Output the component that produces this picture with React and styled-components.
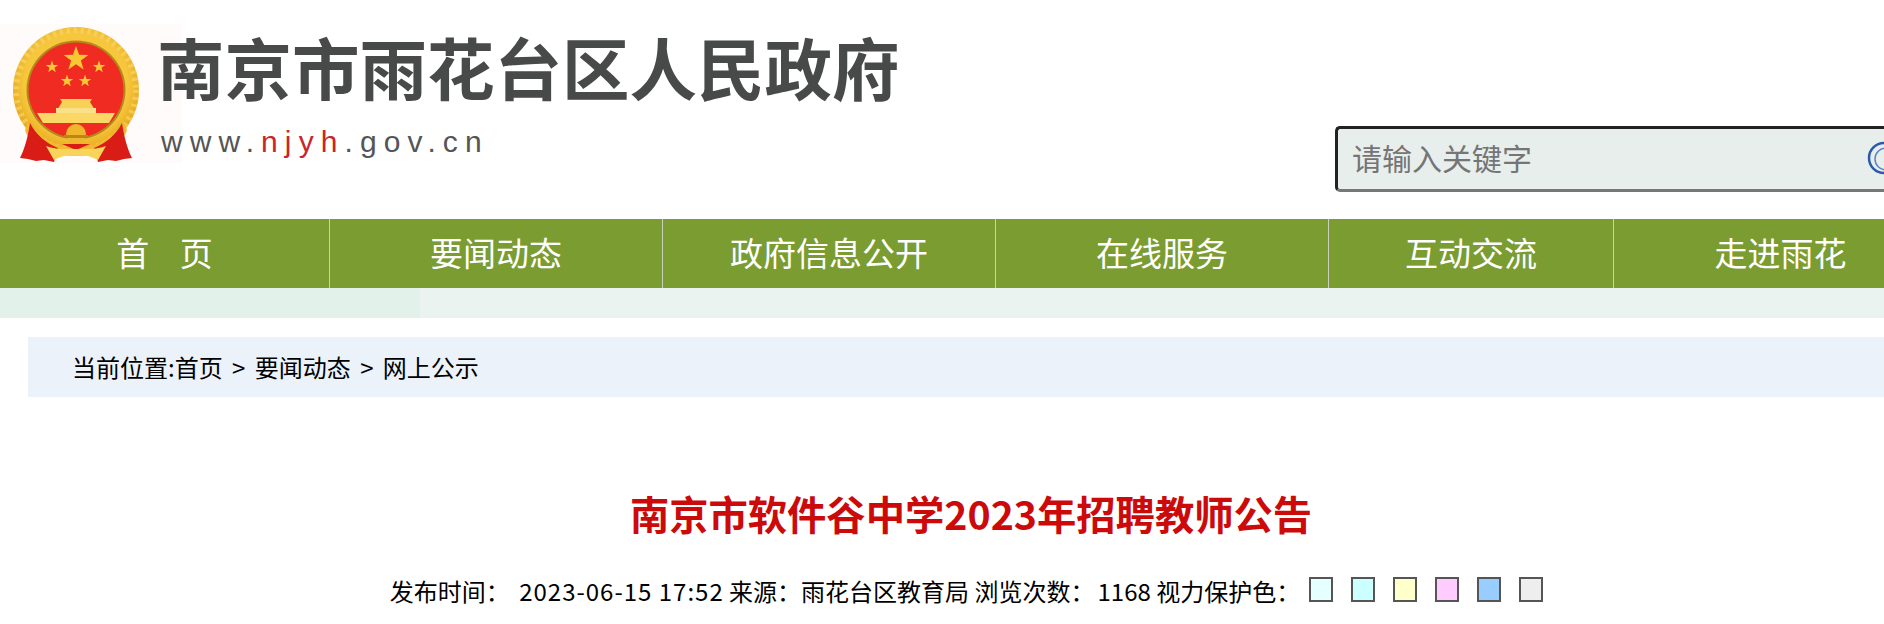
import React from "react";
import styled, { createGlobalStyle } from "styled-components";

const CJK = `"Noto Sans CJK SC", "Noto Sans", sans-serif`;

const Global = createGlobalStyle`
  html, body { margin: 0; padding: 0; background: #fff; overflow: hidden; height: 624px; }
  body { font-family: ${CJK}; color: #000; }
`;

const Page = styled.div`
  width: 1942px;
  height: 624px;
  overflow: hidden;
`;

const Header = styled.header`
  display: flex;
  height: 219px;
`;

const Brand = styled.div`
  display: flex;
  align-items: flex-start;
  height: 139px;
  margin-top: 24px;
  background: linear-gradient(to right, #fffbfb 182px, transparent 182px);
`;

const Emblem = styled.svg`
  display: block;
  width: 157px;
  height: 139px;
  flex: none;
`;

const BrandText = styled.div`
  display: flex;
  flex-direction: column;
  margin-top: 8px;
`;

const SiteName = styled.div`
  font-size: 67.5px;
  font-weight: 700;
  line-height: 68px;
  color: #484a49;
  white-space: nowrap;
`;

const SiteUrl = styled.div`
  margin: 25px 0 0 4px;
  font-family: "Liberation Sans", Arial, sans-serif;
  font-size: 30px;
  line-height: 34px;
  letter-spacing: 7.1px;
  color: #555;
  white-space: nowrap;
`;

const UrlAccent = styled.span`
  color: #c8262a;
`;

const Search = styled.form`
  display: flex;
  align-items: center;
  box-sizing: border-box;
  width: 570px;
  height: 66px;
  margin: auto 37px 27px auto;
  padding: 0 0 0 14px;
  background: #e8eeec;
  border: 3px solid;
  border-color: #222 #777 #777 #222;
  border-radius: 5px;
`;

const SearchInput = styled.input`
  flex: 1;
  min-width: 0;
  border: 0;
  outline: 0;
  padding: 0 0 5px;
  background: transparent;
  font-family: ${CJK};
  font-size: 30px;
  &::placeholder { color: #757575; opacity: 1; }
`;

const SearchButton = styled.button`
  flex: none;
  width: 36px;
  height: 38px;
  padding: 0;
  border: 0;
  background: transparent;
`;

const Nav = styled.nav`
  display: flex;
  height: 69px;
  background: #7a9c30;
`;

const NavItem = styled.a`
  flex: none;
  box-sizing: border-box;
  width: ${p => p.$w}px;
  border-right: 1px solid #c9cfb8;
  font-size: 33px;
  line-height: 66px;
  color: #fff;
  text-align: center;
  white-space: pre;
  word-spacing: ${p => p.$gap || 0}px;
  &:last-child { border-right: 0; }
`;

const Band = styled.div`
  height: 30px;
  background: linear-gradient(to right, #e3f1eb 420px, #eaf3ef 420px);
`;

const Crumbs = styled.div`
  display: flex;
  align-items: center;
  box-sizing: border-box;
  height: 60px;
  margin: 19px 0 0 28px;
  padding: 0 0 2px 44px;
  background: #ebf2fa;
  font-size: 24px;
  white-space: pre;
`;

const CrumbSep = styled.span`
  margin: 0 4px;
`;

const Title = styled.h1`
  margin: 90px 0 0;
  font-size: 39.3px;
  line-height: 52px;
  font-weight: 700;
  color: #cc0a0a;
  text-align: center;
`;

const Meta = styled.div`
  display: flex;
  justify-content: center;
  align-items: center;
  margin-top: 34px;
  padding-right: 9px;
  font-size: 24px;
  line-height: 36px;
  white-space: pre;
`;

const Value = styled.span`
  margin-left: 3px;
  letter-spacing: ${p => (p.$wide ? "1px" : "0")};
`;

const Swatches = styled.div`
  display: flex;
  gap: 18px;
  margin: 0 0 4px 9px;
`;

const Swatch = styled.span`
  display: block;
  box-sizing: border-box;
  width: 24px;
  height: 25px;
  border: 2px solid #555;
  background: ${p => p.$c};
`;

const star = (cx, cy, r, fill) => {
  const pts = [];
  for (let i = 0; i < 10; i++) {
    const a = -Math.PI / 2 + (i * Math.PI) / 5;
    const rr = i % 2 ? r * 0.4 : r;
    pts.push(`${(cx + rr * Math.cos(a)).toFixed(1)},${(cy + rr * Math.sin(a)).toFixed(1)}`);
  }
  return <polygon points={pts.join(" ")} fill={fill} />;
};

const EmblemArt = () => (
  <Emblem viewBox="0 0 157 139">
    <defs>
      <radialGradient id="gold" cx="50%" cy="45%" r="55%">
        <stop offset="0.75" stopColor="#f6c63c" />
        <stop offset="1" stopColor="#e3a51a" />
      </radialGradient>
    </defs>
    <circle cx="76" cy="66" r="63" fill="url(#gold)" />
    <circle cx="76" cy="66" r="60" fill="none" stroke="#f9d975" strokeWidth="6" strokeDasharray="3 4" opacity="0.6" />
    <circle cx="76" cy="66" r="49.5" fill="#b38a1a" />
    <circle cx="76" cy="66" r="47.5" fill="#ef2b22" />
    {star(76, 35, 13, "#f7c734")}
    {star(52, 43, 6.5, "#f7c734")}
    {star(99, 43, 6.5, "#f7c734")}
    {star(67, 57, 6.5, "#f7c734")}
    {star(85, 57, 6.5, "#f7c734")}
    <path d="M60 75h32l-2 3 5 8H57l5-8z" fill="#f8d257" />
    <path d="M56 84h40v5H56z" fill="#fbe08a" />
    <path d="M37 89h78l-6 10H43z" fill="#fbd766" />
    <path d="M28 98c12 16 30 26 48 26s36-10 48-26l3 8c-3 12-24 26-51 26S28 118 25 106z" fill="#f4b92e" />
    <path d="M30 99c6 12 16 20 28 25l-4 14-10-2-8 1-8-2-8-1c5-10 8-22 10-35z" fill="#d91c16" />
    <path d="M122 99c-6 12-16 20-28 25l4 14 10-2 8 1 8-2 8-1c-5-10-8-22-10-35z" fill="#d91c16" />
    <path d="M62 120h28l-14 6z" fill="#d91c16" />
    <circle cx="76" cy="110" r="10" fill="#f0b72d" />
    <path d="M46 122c10 4 20 3 30 3s20 1 30-3l-8 14c-8-4-15-6-22-4-7-2-14 0-22 4z" fill="#f9d45a" />
    <path d="M64 111h24v3H64z" fill="#b9861a" />
  </Emblem>
);

const SearchIcon = () => (
  <svg width="36" height="38" viewBox="0 0 36 38" fill="none">
    <circle cx="18" cy="18" r="15" stroke="#2a5aa8" strokeWidth="2.5" />
    <circle cx="20" cy="19" r="11" stroke="#5b86c6" strokeWidth="1.5" />
    <path d="M29 29l6 7" stroke="#2a5aa8" strokeWidth="3" />
  </svg>
);

const navItems = [
  { label: "首 页", w: 330, gap: 23 },
  { label: "要闻动态", w: 333 },
  { label: "政府信息公开", w: 333 },
  { label: "在线服务", w: 333 },
  { label: "互动交流", w: 285 },
  { label: "走进雨花", w: 333 },
];

const swatches = ["#e6ffff", "#ccffff", "#ffffcc", "#ffccff", "#99ccff", "#eeeeee"];

export default function App() {
  return (
    <Page>
      <Global />
      <Header>
        <Brand>
          <EmblemArt />
          <BrandText>
            <SiteName>南京市雨花台区人民政府</SiteName>
            <SiteUrl>
              www.<UrlAccent>njyh</UrlAccent>.gov.cn
            </SiteUrl>
          </BrandText>
        </Brand>
        <Search onSubmit={e => e.preventDefault()}>
          <SearchInput placeholder="请输入关键字" aria-label="请输入关键字" />
          <SearchButton type="button" aria-label="搜索">
            <SearchIcon />
          </SearchButton>
        </Search>
      </Header>
      <Nav>
        {navItems.map(({ label, w, gap }) => (
          <NavItem key={label} $w={w} $gap={gap}>{label}</NavItem>
        ))}
      </Nav>
      <Band />
      <Crumbs>
        当前位置:首页<CrumbSep> &gt; </CrumbSep>要闻动态<CrumbSep> &gt; </CrumbSep>网上公示
      </Crumbs>
      <Title>南京市软件谷中学2023年招聘教师公告</Title>
      <Meta>
        发布时间：<Value $wide> 2023-06-15 17:52</Value> 来源：雨花台区教育局 浏览次数：<Value>1168</Value> 视力保护色：
        <Swatches>
          {swatches.map(c => (
            <Swatch key={c} $c={c} />
          ))}
        </Swatches>
      </Meta>
    </Page>
  );
}
